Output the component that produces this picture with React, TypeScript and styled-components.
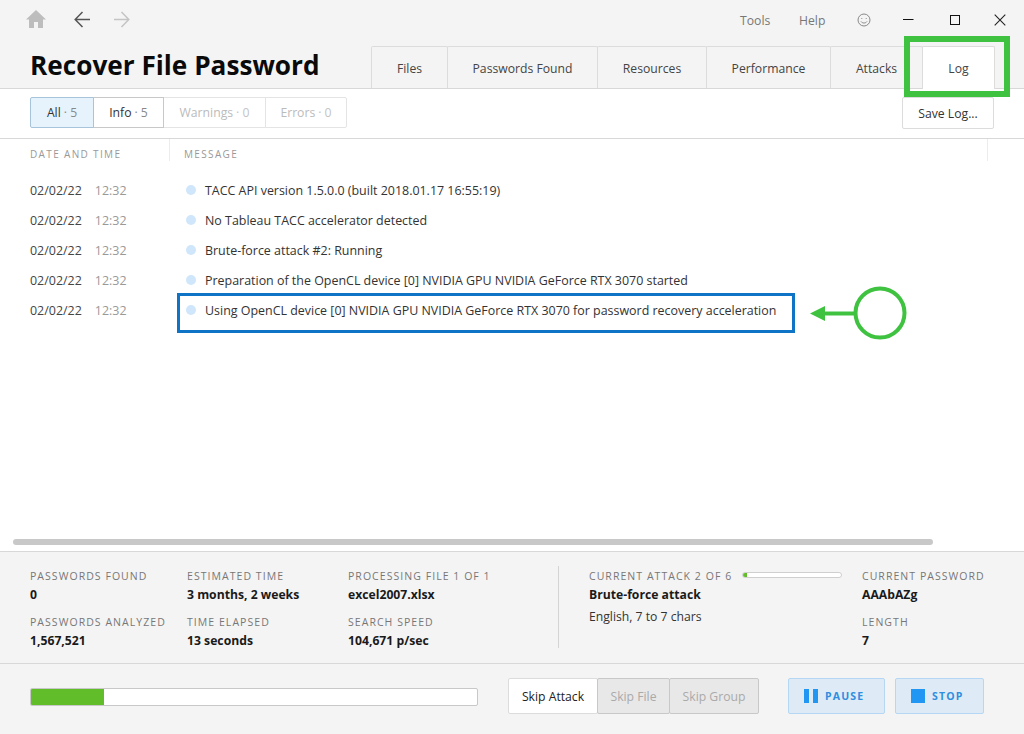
import React from "react";
import styled, { createGlobalStyle } from "styled-components";

const Global = createGlobalStyle`
  html, body { margin: 0; padding: 0; background: #fff; }
  body { font-family: "Open Sans", "Noto Sans", sans-serif; color: #222; }
  * { box-sizing: border-box; }
`;

const Page = styled.div`
  position: relative; width: 1024px; height: 734px; overflow: hidden;
  display: flex; flex-direction: column; background: #fff;
`;
const Header = styled.header`
  height: 89px; flex: none; background: #f4f4f4; border-bottom: 1px solid #d8d8d8;
  display: flex; flex-direction: column;
`;
const TopBar = styled.div`
  height: 46px; flex: none; display: flex; align-items: flex-start; justify-content: space-between;
  padding: 10px 18px 0 26px;
`;
const NavIcons = styled.div`display: flex; align-items: flex-start;`;
const NavIcon = styled.svg<{ $ml?: number }>`
  display: block; margin-left: ${p => p.$ml ?? 0}px;
`;
const Menu = styled.div`display: flex; align-items: center; height: 20px;`;
const MenuItem = styled.span<{ $w: number }>`
  width: ${p => p.$w}px; font-size: 12.2px; color: #777;
`;
const WinIcon = styled.svg<{ $ml: number }>`display: block; margin-left: ${p => p.$ml}px;`;
const TitleRow = styled.div`
  display: flex; justify-content: space-between; align-items: flex-end; flex: 1; padding: 0 30px;
  position: relative;
`;
const Title = styled.h1`
  margin: 0 0 4px; font-size: 26.2px; line-height: 38px; font-weight: 700; color: #0a0a0a;
  align-self: flex-end; white-space: nowrap;
`;
const Tabs = styled.nav`display: flex; height: 42px; align-items: flex-start;`;
const Tab = styled.div<{ $w: number; $active?: boolean }>`
  width: ${p => p.$w}px; height: ${p => (p.$active ? 43 : 42)}px;
  display: flex; align-items: center; justify-content: center; padding-top: ${p => (p.$active ? 1 : 2)}px;
  font-size: 12.2px; color: #444;
  background: ${p => (p.$active ? "#fff" : "#f4f4f4")};
  border: 1px solid #dcdcdc; border-bottom: none;
  margin-right: -1px;
  border-radius: 2px 2px 0 0; position: relative; z-index: ${p => (p.$active ? 1 : 0)};
`;
const Toolbar = styled.div`
  height: 50px; flex: none; border-bottom: 1px solid #d8d8d8; display: flex; justify-content: space-between;
  align-items: flex-start; padding: 8px 30px 0;
`;
const Filters = styled.div`display: flex; height: 31px;`;
const Filter = styled.div<{ $w: number; $kind: "on" | "normal" | "off" }>`
  width: ${p => p.$w}px; display: flex; align-items: center; justify-content: center;
  font-size: 12.2px; margin-right: -1px;
  color: ${p => (p.$kind === "off" ? "#bbb" : "#333")};
  background: ${p => (p.$kind === "on" ? "#e6f3fd" : "#fff")};
  border: 1px solid ${p => (p.$kind === "on" ? "#a8c4da" : p.$kind === "normal" ? "#c8c8c8" : "#e4e4e4")};
  position: relative; z-index: ${p => (p.$kind === "off" ? 0 : p.$kind === "on" ? 2 : 1)};
  span { color: ${p => (p.$kind === "off" ? "#c4c4c4" : "#888")}; margin-left: 3px; }
  &:first-child { border-radius: 2px 0 0 2px; }
  &:last-child { border-radius: 0 2px 2px 0; margin-right: 0; }
`;
const SaveButton = styled.div`
  width: 92px; height: 32px; display: flex; align-items: center; justify-content: center;
  font-size: 12.2px; color: #333; background: #fff; border: 1px solid #dcdcdc; border-radius: 2px;
`;
const Columns = styled.div`display: flex; flex: none; height: 22px; font-size: 10px; letter-spacing: 1.35px; color: #999;`;
const ColumnHead = styled.div<{ $w: number; $edge?: boolean }>`
  width: ${p => p.$w}px; padding-left: ${p => (p.$edge ? 30 : 14)}px; padding-top: 9px; line-height: 12px;
  border-right: 1px solid #ececec;
`;
const LogList = styled.div`flex: 1; padding-top: 14px;`;
const LogRow = styled.div`display: flex; height: 30px; align-items: center; font-size: 12.45px;`;
const Stamp = styled.div`width: 186px; padding-left: 30px; color: #444; flex: none; display: flex;`;
const Time = styled.span`color: #999; margin-left: 13px;`;
const Dot = styled.i`
  width: 10px; height: 10px; border-radius: 50%; background: #cfe6fb; flex: none; margin-right: 9px;
`;
const Msg = styled.span`color: #333; white-space: nowrap;`;
const ScrollTrack = styled.div`height: 14px; flex: none; padding: 2px 0 0 13px;`;
const ScrollThumb = styled.div`width: 920px; height: 6px; background: #c8c8c8; border-radius: 3px;`;
const Stats = styled.section`
  height: 113px; flex: none; background: #f4f4f4; border-top: 1px solid #d8d8d8; border-bottom: 1px solid #d8d8d8;
  display: flex; padding: 15px 0 0 30px;
`;
const StatCol = styled.div<{ $w: number }>`width: ${p => p.$w}px; flex: none;`;
const Stat = styled.div`height: 46px;`;
const Label = styled.div`
  font-size: 10.5px; line-height: 18px; letter-spacing: 1.05px; color: #777; white-space: nowrap;
  display: flex; align-items: center;
`;
const Value = styled.div`font-size: 12.2px; line-height: 20px; font-weight: 700; color: #1a1a1a; white-space: nowrap;`;
const Note = styled.div`font-size: 12.2px; line-height: 18px; color: #333; margin-top: 3px;`;
const Divider = styled.div`width: 1px; height: 82px; background: #d4d4d4; flex: none; margin: -1px 30px 0 0;`;
const MiniBar = styled.div`
  position: absolute; left: 153px; top: 5px; width: 100px; height: 6px; background: #fff;
  border: 1px solid #cfcfcf; border-radius: 3px; overflow: hidden;
`;
const MiniFill = styled.div`width: 4px; height: 100%; background: #62bd2a;`;
const AttackHead = styled.div`position: relative;`;
const Footer = styled.footer`
  flex: none; height: 70px; background: #f4f4f4; display: flex; align-items: flex-start; padding: 14px 0 0 30px;
`;
const Progress = styled.div`
  width: 448px; height: 18px; margin-top: 10px; background: #fff; border: 1px solid #c8c8c8;
  border-radius: 2px; overflow: hidden;
`;
const ProgressFill = styled.div`width: 73px; height: 100%; background: #62bd2a;`;
const SkipGroup = styled.div`display: flex; height: 36px; margin: 0 30px 0 30px;`;
const Skip = styled.div<{ $w: number; $off?: boolean }>`
  width: ${p => p.$w}px; display: flex; align-items: center; justify-content: center;
  font-size: 12.2px; margin-right: -1px;
  color: ${p => (p.$off ? "#aaa" : "#222")};
  background: ${p => (p.$off ? "#e8e8e8" : "#fff")};
  border: 1px solid ${p => (p.$off ? "#c8c8c8" : "#dcdcdc")};
  border-radius: 2px; position: relative; z-index: ${p => (p.$off ? 1 : 0)};
`;
const Action = styled.div<{ $w: number; $ml?: number }>`
  width: ${p => p.$w}px; height: 36px; margin-left: ${p => p.$ml ?? 0}px;
  display: flex; align-items: center; padding-left: 15px; gap: 7px;
  background: #deebf6; border: 1px solid #b5d7f3; border-radius: 2px;
  font-size: 10.5px; font-weight: 700; letter-spacing: 1.2px; color: #2f8ee0;
`;
const ActionIcon = styled.svg`display: block; flex: none;`;
const Callout = styled.svg`position: absolute; left: 0; top: 0; pointer-events: none; z-index: 5;`;

const logs = [
  "TACC API version 1.5.0.0 (built 2018.01.17 16:55:19)",
  "No Tableau TACC accelerator detected",
  "Brute-force attack #2: Running",
  "Preparation of the OpenCL device [0] NVIDIA GPU NVIDIA GeForce RTX 3070 started",
  "Using OpenCL device [0] NVIDIA GPU NVIDIA GeForce RTX 3070 for password recovery acceleration",
];

export default function App() {
  return (
    <Page>
      <Global />
      <Header>
        <TopBar>
          <NavIcons>
            <NavIcon width="20" height="18" viewBox="0 0 20 18">
              <path d="M8 18v-6h4v6h5V9.5h3L10 0 0 9.5h3V18z" fill="#bdbdbd" />
            </NavIcon>
            <NavIcon $ml={28} width="16" height="18" viewBox="0 0 16 18" fill="none" stroke="#555" strokeWidth="1.5">
              <path d="M16 9.5H1.5M8.5 2 1.2 9.5l7.3 7.5" />
            </NavIcon>
            <NavIcon $ml={24} width="16" height="18" viewBox="0 0 16 18" fill="none" stroke="#c4c4c4" strokeWidth="1.5">
              <path d="M0 9.5h14.5M7.5 2l7.3 7.5L7.5 17" />
            </NavIcon>
          </NavIcons>
          <Menu>
            <MenuItem $w={59}>Tools</MenuItem>
            <MenuItem $w={58}>Help</MenuItem>
            <svg width="14" height="14" viewBox="0 0 14 14" fill="none" stroke="#888" strokeWidth="1">
              <circle cx="7" cy="7" r="6" />
              <circle cx="4.8" cy="5.5" r=".6" fill="#888" stroke="none" />
              <circle cx="9.2" cy="5.5" r=".6" fill="#888" stroke="none" />
              <path d="M4 8.5c1.5 2 4.5 2 6 0" />
            </svg>
            <WinIcon $ml={32} width="11" height="14" viewBox="0 0 11 14">
              <path d="M0 6.5h10.5" stroke="#111" strokeWidth="1" />
            </WinIcon>
            <WinIcon $ml={36} width="10" height="10" viewBox="0 0 10 10" fill="none">
              <rect x=".5" y=".5" width="9" height="9" stroke="#111" />
            </WinIcon>
            <WinIcon $ml={34} width="12" height="12" viewBox="0 0 12 12" fill="none">
              <path d="M.7.7l10.6 10.6M11.3.7.7 11.3" stroke="#222" strokeWidth="1.1" />
            </WinIcon>
          </Menu>
        </TopBar>
        <TitleRow>
          <Title>Recover File Password</Title>
          <Tabs>
            <Tab $w={77}>Files</Tab>
            <Tab $w={151}>Passwords Found</Tab>
            <Tab $w={110}>Resources</Tab>
            <Tab $w={125}>Performance</Tab>
            <Tab $w={93}>Attacks</Tab>
            <Tab $w={73} $active>Log</Tab>
          </Tabs>
        </TitleRow>
      </Header>
      <Toolbar>
        <Filters>
          <Filter $w={64} $kind="on">All <span>· 5</span></Filter>
          <Filter $w={71} $kind="normal">Info <span>· 5</span></Filter>
          <Filter $w={103} $kind="off">Warnings <span>· 0</span></Filter>
          <Filter $w={82} $kind="off">Errors <span>· 0</span></Filter>
        </Filters>
        <SaveButton>Save Log...</SaveButton>
      </Toolbar>
      <Columns>
        <ColumnHead $w={170} $edge>DATE AND TIME</ColumnHead>
        <ColumnHead $w={818}>MESSAGE</ColumnHead>
      </Columns>
      <LogList>
        {logs.map(m => (
          <LogRow key={m}>
            <Stamp>02/02/22<Time>12:32</Time></Stamp>
            <Dot />
            <Msg>{m}</Msg>
          </LogRow>
        ))}
      </LogList>
      <ScrollTrack><ScrollThumb /></ScrollTrack>
      <Stats>
        <StatCol $w={157}>
          <Stat><Label>PASSWORDS FOUND</Label><Value>0</Value></Stat>
          <Stat><Label>PASSWORDS ANALYZED</Label><Value>1,567,521</Value></Stat>
        </StatCol>
        <StatCol $w={161}>
          <Stat><Label>ESTIMATED TIME</Label><Value>3 months, 2 weeks</Value></Stat>
          <Stat><Label>TIME ELAPSED</Label><Value>13 seconds</Value></Stat>
        </StatCol>
        <StatCol $w={210}>
          <Stat><Label>PROCESSING FILE 1 OF 1</Label><Value>excel2007.xlsx</Value></Stat>
          <Stat><Label>SEARCH SPEED</Label><Value>104,671 p/sec</Value></Stat>
        </StatCol>
        <Divider />
        <StatCol $w={273}>
          <AttackHead>
            <Label>CURRENT ATTACK 2 OF 6</Label>
            <MiniBar><MiniFill /></MiniBar>
          </AttackHead>
          <Value>Brute-force attack</Value>
          <Note>English, 7 to 7 chars</Note>
        </StatCol>
        <StatCol $w={150}>
          <Stat><Label>CURRENT PASSWORD</Label><Value>AAAbAZg</Value></Stat>
          <Stat><Label>LENGTH</Label><Value>7</Value></Stat>
        </StatCol>
      </Stats>
      <Footer>
        <Progress><ProgressFill /></Progress>
        <SkipGroup>
          <Skip $w={90}>Skip Attack</Skip>
          <Skip $w={73} $off>Skip File</Skip>
          <Skip $w={90} $off>Skip Group</Skip>
        </SkipGroup>
        <Action $w={97}>
          <ActionIcon width="14" height="14" viewBox="0 0 14 14" fill="#2196f3">
            <rect width="5" height="14" /><rect x="9" width="5" height="14" />
          </ActionIcon>
          PAUSE
        </Action>
        <Action $w={89} $ml={10}>
          <ActionIcon width="14" height="14" viewBox="0 0 14 14" fill="#2196f3">
            <rect width="14" height="14" />
          </ActionIcon>
          STOP
        </Action>
      </Footer>
      <Callout width="1024" height="734" viewBox="0 0 1024 734" fill="none">
        <rect x="907" y="39" width="100" height="55" stroke="#3ec240" strokeWidth="6" />
        <rect x="178.5" y="294.5" width="615" height="37" stroke="#0f73c6" strokeWidth="3" />
        <path d="M855 313.5h-30" stroke="#3ec240" strokeWidth="4" />
        <path d="M810 313.5l15-7.5v15z" fill="#3ec240" />
        <circle cx="880" cy="313" r="24.5" stroke="#3ec240" strokeWidth="4" />
      </Callout>
    </Page>
  );
}
